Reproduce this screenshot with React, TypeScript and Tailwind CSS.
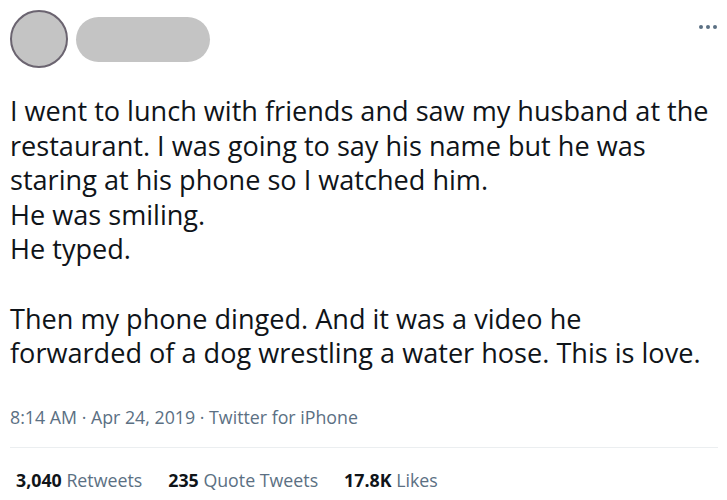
import React from "react";

const lines = [
  "I went to lunch with friends and saw my husband at the",
  "restaurant. I was going to say his name but he was",
  "staring at his phone so I watched him.",
  "He was smiling.",
  "He typed.",
  "\u00a0",
  "Then my phone dinged. And it was a video he",
  "forwarded of a dog wrestling a water hose. This is love.",
];

export default function App() {
  return (
    <div className="w-[727px] h-[500px] bg-white overflow-hidden" style={{ fontFamily: '"Open Sans", "Noto Sans", sans-serif' }}>
      <div className="flex items-start justify-between pl-[10px] pr-[10px] pt-[10px]">
        <div className="flex items-center gap-[8px]">
          <div className="w-[58px] h-[58px] rounded-full bg-[#c4c4c4] border-[2px] border-[#6b6470]" />
          <div className="w-[134px] h-[45px] rounded-full bg-[#c4c4c4]" />
        </div>
        <div className="flex gap-[3px] mt-[15px]">
          <div className="w-[4px] h-[4px] rounded-full bg-[#5b7083]" />
          <div className="w-[4px] h-[4px] rounded-full bg-[#5b7083]" />
          <div className="w-[4px] h-[4px] rounded-full bg-[#5b7083]" />
        </div>
      </div>
      <div className="px-[10px] mt-[26px] text-[27.1px] leading-[34.6px] text-[#0f1419] whitespace-nowrap">
        {lines.map((l, i) => (
          <div key={i}>{l}</div>
        ))}
      </div>
      <div className="px-[10px] mt-[34px] text-[17.8px] leading-[24px] text-[#5b7083]">
        8:14 AM · Apr 24, 2019 · Twitter for iPhone
      </div>
      <div className="mx-[10px] mt-[18px] border-t border-[#ebeef0] w-[708px]" />
      <div className="flex gap-[26px] px-[16px] pt-[20px] text-[17.8px] leading-[24px]">
        <span><b className="text-[#0f1419]">3,040</b> <span className="text-[#5b7083]">Retweets</span></span>
        <span><b className="text-[#0f1419]">235</b> <span className="text-[#5b7083]">Quote Tweets</span></span>
        <span><b className="text-[#0f1419]">17.8K</b> <span className="text-[#5b7083]">Likes</span></span>
      </div>
    </div>
  );
}
